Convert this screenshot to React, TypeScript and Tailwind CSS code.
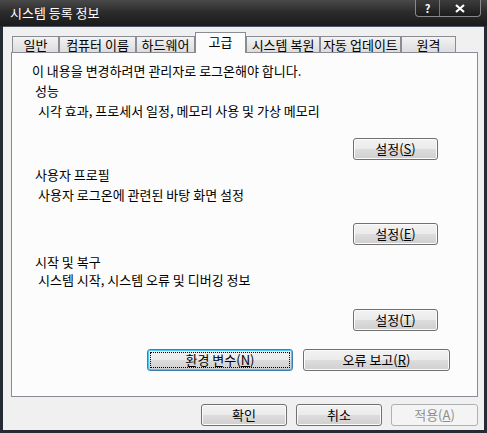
import React from 'react';

const tabs = [
  { label: '일반', w: 'w-[47px]' },
  { label: '컴퓨터 이름', w: 'w-[77px]' },
  { label: '하드웨어', w: 'w-[59px]' },
  { label: '고급', w: 'w-[51px]', active: true },
  { label: '시스템 복원', w: 'w-[74px]' },
  { label: '자동 업데이트', w: 'w-[81px]' },
  { label: '원격', w: 'w-[55px]' },
];

const btn =
  'h-[22px] rounded-[3px] border border-[#707070] bg-[linear-gradient(#f2f2f2_0%,#ebebeb_50%,#dddddd_50%,#cfcfcf_100%)] shadow-[inset_0_0_0_1px_#fbfbfb] text-[13px] leading-[20px] text-black flex items-center justify-center';

const WinButton = ({ children, className = '' }: { children: React.ReactNode; className?: string }) => (
  <button type="button" className={`${btn} ${className}`}>
    {children}
  </button>
);

const App = () => {
  return (
    <div className="w-[487px] h-[433px] bg-[#262a33] flex flex-col font-['Noto_Sans_CJK_KR',sans-serif] select-none overflow-hidden">
      {/* title bar */}
      <div className="h-[26px] flex items-start justify-between bg-[linear-gradient(#4a4a4a,#2c2c2c_45%,#1b1b1b)]">
        <span className="ml-[10px] mt-[4px] text-[13px] leading-[18px] text-white">시스템 등록 정보</span>
        <div className="mr-[6px] flex h-[17px] rounded-b-[4px] border border-t-0 border-[#8a8a8a] bg-[linear-gradient(#3c3c3c,#1c1c1c)] overflow-hidden">
          <div className="w-[24px] flex items-center justify-center border-r border-[#777] text-white text-[11px] font-bold leading-none">
            ?
          </div>
          <div className="w-[40px] flex items-center justify-center">
            <svg width="10" height="9" viewBox="0 0 10 9">
              <path d="M1 1 L9 8 M9 1 L1 8" stroke="#fff" strokeWidth="2.2" />
            </svg>
          </div>
        </div>
      </div>

      {/* client area */}
      <div className="mx-[3px] h-[404px] border-t border-[#4d5562] bg-[#f0f0f0] flex flex-col pt-[5px]">
        <div className="ml-[9px] h-[20px] flex items-end">
          {tabs.map((t) =>
            t.active ? (
              <div
                key={t.label}
                className={`${t.w} h-[21px] -mb-[1px] relative z-10 border border-b-0 border-[#898c95] bg-[#fcfcfc] text-[13px] leading-[18px] text-black text-center`}
              >
                {t.label}
              </div>
            ) : (
              <div
                key={t.label}
                className={`${t.w} h-[16px] border border-b-0 border-[#898c95] bg-[linear-gradient(#f3f3f3,#dcdcdc)] text-[13px] leading-[15px] text-black text-center`}
              >
                {t.label}
              </div>
            )
          )}
        </div>

        <div className="ml-[8px] w-[467px] h-[345px] border border-[#898c95] bg-[#fcfcfc] flex flex-col pt-[8px] text-[13px] leading-[20px] text-black">
          <div className="pl-[20px]">이 내용을 변경하려면 관리자로 로그온해야 합니다.</div>

          <div className="pl-[23px]">성능</div>
          <div className="pl-[26px]">시각 효과, 프로세서 일정, 메모리 사용 및 가상 메모리</div>
          <WinButton className="ml-[341px] mt-[17px] w-[85px]">
            설정(<u>S</u>)
          </WinButton>

          <div className="pl-[23px] mt-[5px]">사용자 프로필</div>
          <div className="pl-[26px]">사용자 로그온에 관련된 바탕 화면 설정</div>
          <WinButton className="ml-[341px] mt-[18px] w-[85px]">
            설정(<u>E</u>)
          </WinButton>

          <div className="pl-[23px] mt-[8px] leading-[17px]">시작 및 복구</div>
          <div className="pl-[26px]">시스템 시작, 시스템 오류 및 디버깅 정보</div>
          <WinButton className="ml-[341px] mt-[19px] w-[85px]">
            설정(<u>T</u>)
          </WinButton>

          <div className="ml-[135px] mt-[18px] flex gap-[10px]">
            <button
              type="button"
              className="relative w-[146px] h-[22px] rounded-[3px] border border-[#3c7fb1] bg-[linear-gradient(#f2f2f2_0%,#ebebeb_50%,#dddddd_50%,#cfcfcf_100%)] shadow-[inset_0_0_0_1px_#48c8f8] text-[13px] leading-[20px] text-black flex items-center justify-center"
            >
              <span className="absolute inset-[2px] border border-dotted border-black" />
              환경 변수(<u>N</u>)
            </button>
            <WinButton className="w-[147px]">
              오류 보고(<u>R</u>)
            </WinButton>
          </div>
        </div>

        <div className="mt-[7px] mr-[6px] flex justify-end gap-[10px]">
          <WinButton className="w-[86px]">확인</WinButton>
          <WinButton className="w-[86px] -ml-px">취소</WinButton>
          <button
            type="button"
            className="w-[87px] h-[22px] -ml-px rounded-[3px] border border-[#adb2b5] bg-[#f4f4f4] text-[13px] leading-[20px] text-[#8d8d8d] flex items-center justify-center"
          >
            적용(<u>A</u>)
          </button>
        </div>
      </div>
    </div>
  );
};

export default App;
